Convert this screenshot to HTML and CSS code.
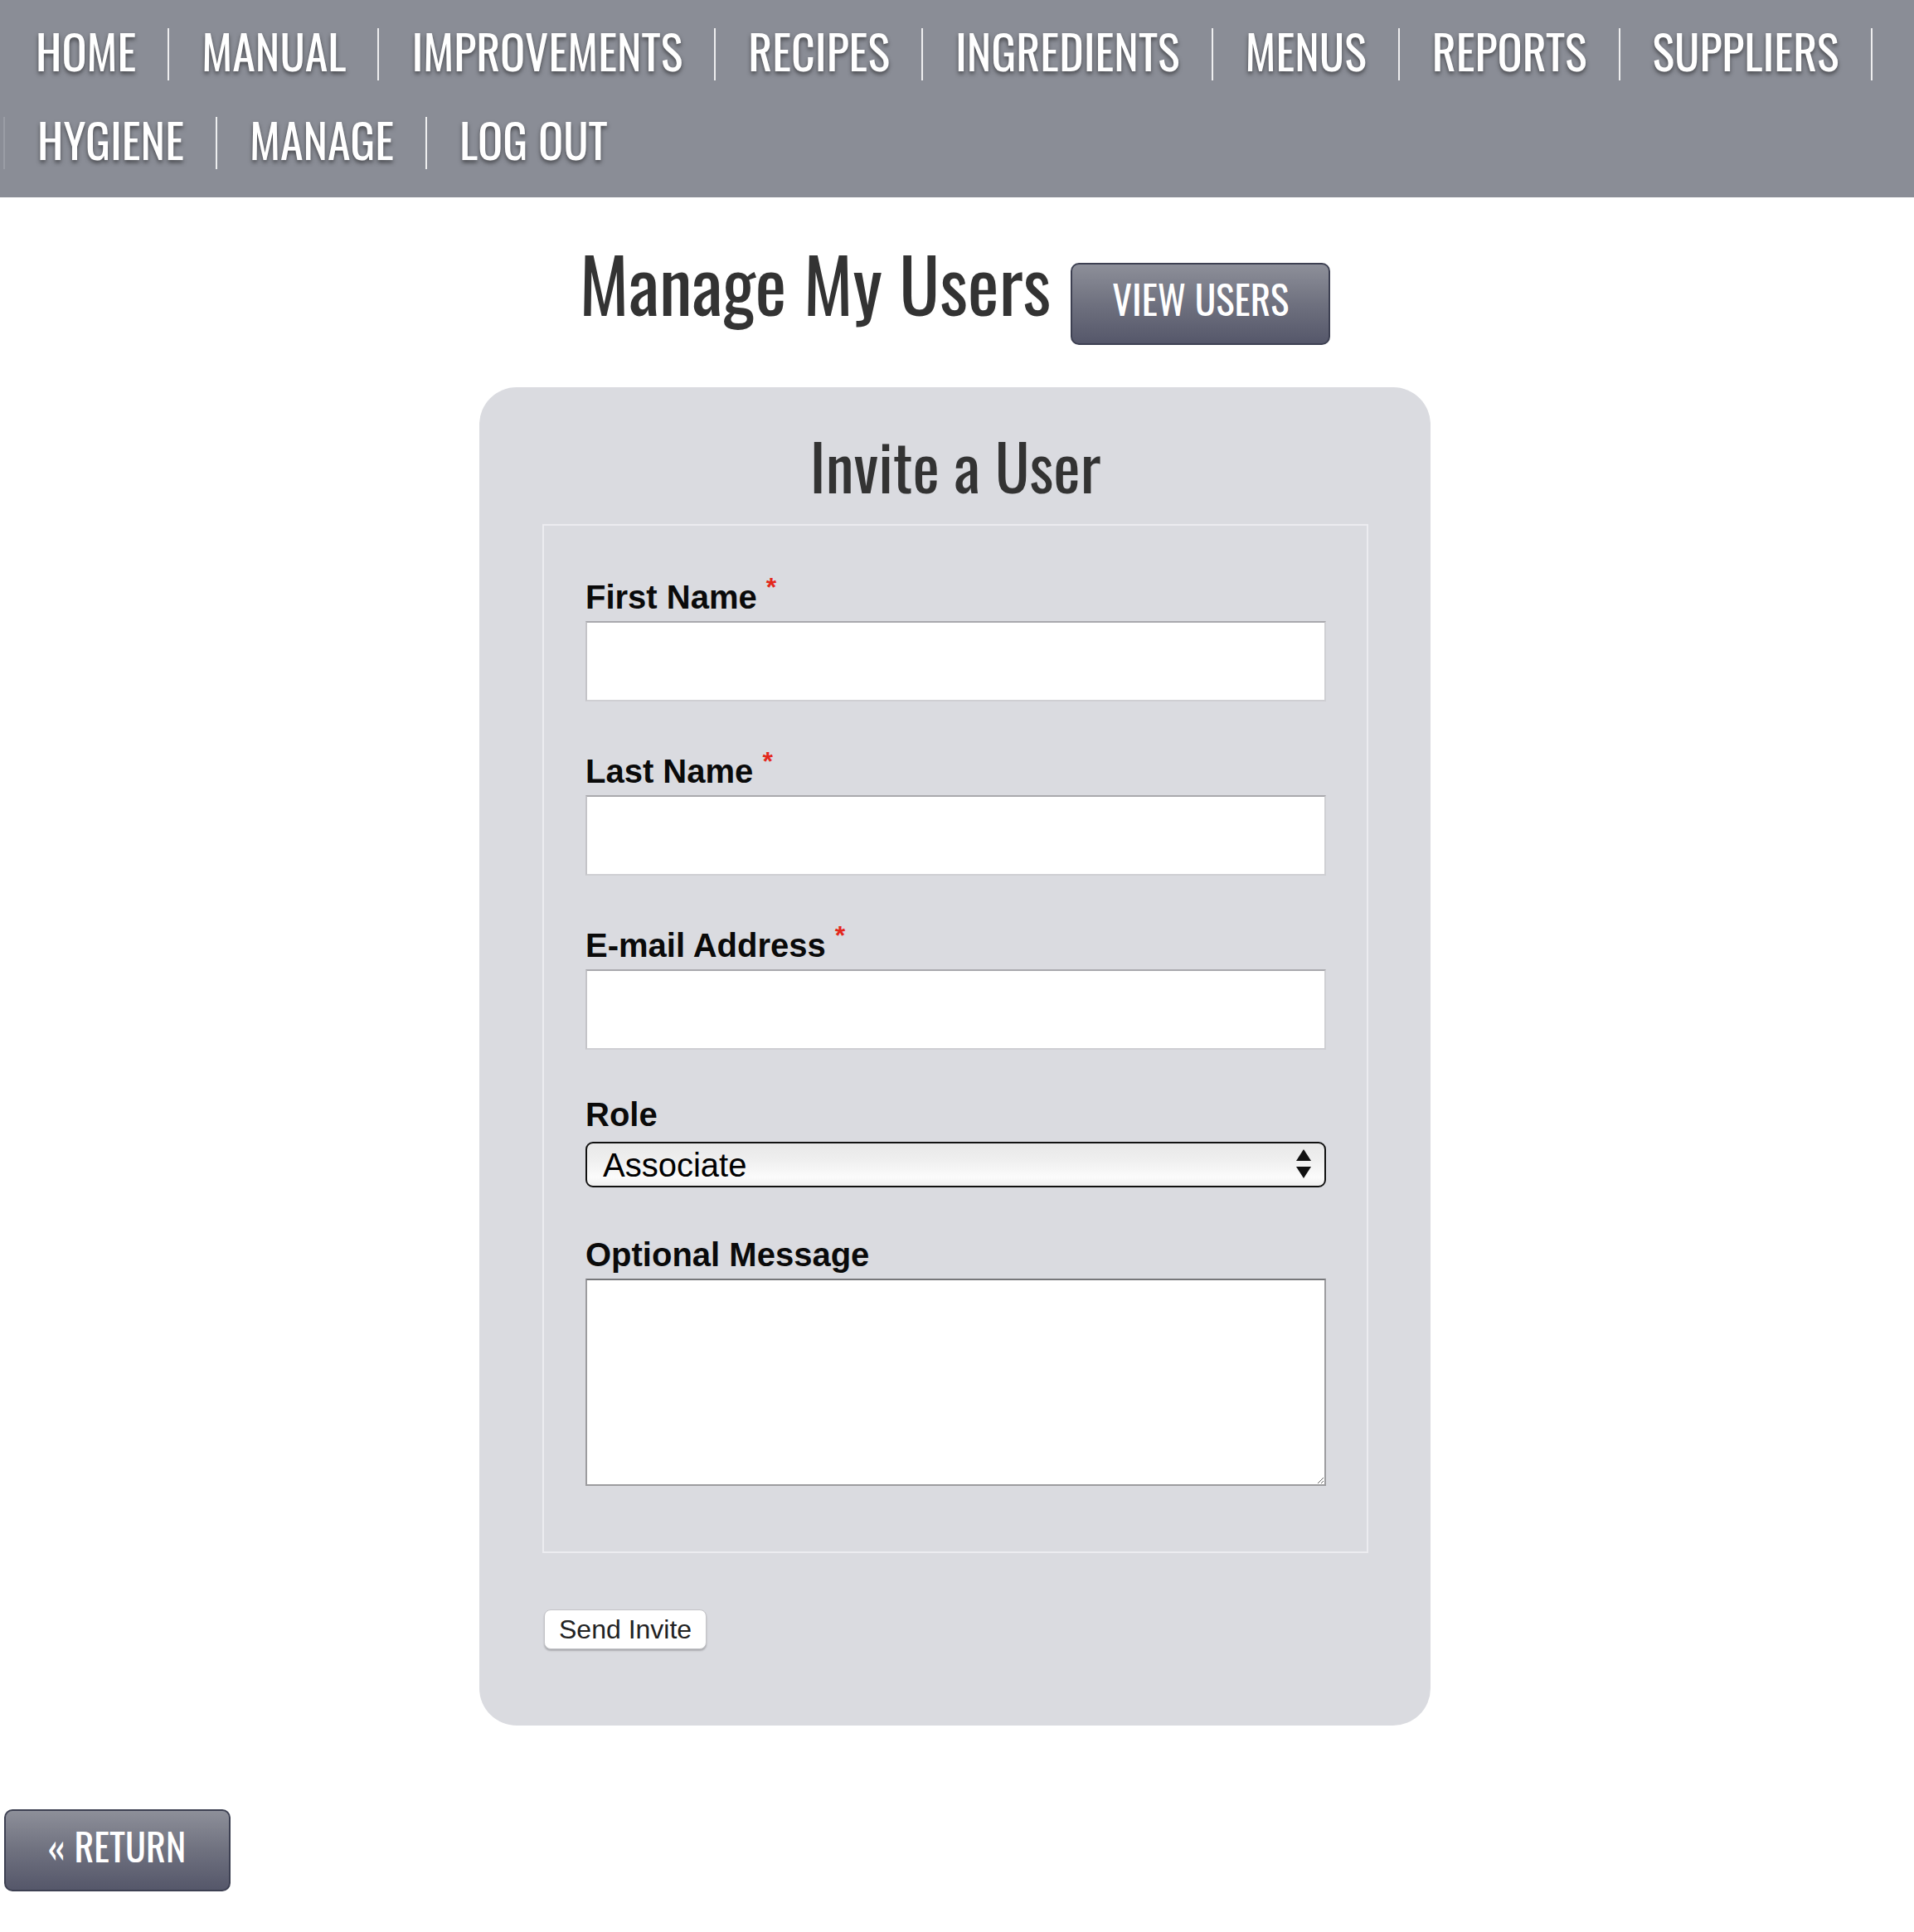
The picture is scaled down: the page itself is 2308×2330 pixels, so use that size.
FILE: index.html
```html
<!DOCTYPE html>
<html lang="en">
<head>
<meta charset="utf-8">
<title>Manage My Users</title>
<link rel="stylesheet" href="styles.css">
</head>
<body>
<nav class="topnav">
  <ul class="nav-list">
    <li class="nav-item"><a class="nav-link" href="#">HOME</a></li>
    <li class="nav-item"><a class="nav-link" href="#">MANUAL</a></li>
    <li class="nav-item"><a class="nav-link" href="#">IMPROVEMENTS</a></li>
    <li class="nav-item"><a class="nav-link" href="#">RECIPES</a></li>
    <li class="nav-item"><a class="nav-link" href="#">INGREDIENTS</a></li>
    <li class="nav-item"><a class="nav-link" href="#">MENUS</a></li>
    <li class="nav-item"><a class="nav-link" href="#">REPORTS</a></li>
    <li class="nav-item"><a class="nav-link" href="#">SUPPLIERS</a></li>
    <li class="nav-item nav-item-wrap"><a class="nav-link" href="#">HYGIENE</a></li>
    <li class="nav-item"><a class="nav-link" href="#">MANAGE</a></li>
    <li class="nav-item"><a class="nav-link" href="#">LOG OUT</a></li>
  </ul>
</nav>

<main class="page">
  <div class="title-row">
    <h1 class="page-title">Manage My Users</h1>
    <a class="btn-dark" href="#">VIEW USERS</a>
  </div>

  <section class="card">
    <h2 class="card-title">Invite a User</h2>
    <form class="invite-form">
      <fieldset class="fields">
        <div class="field">
          <label class="field-label">First Name <span class="req">*</span></label>
          <input class="text-input" type="text">
        </div>
        <div class="field">
          <label class="field-label">Last Name <span class="req">*</span></label>
          <input class="text-input" type="text">
        </div>
        <div class="field">
          <label class="field-label">E-mail Address <span class="req">*</span></label>
          <input class="text-input" type="text">
        </div>
        <div class="field field-role">
          <label class="field-label">Role</label>
          <div class="select-wrap">
            <select class="select-input">
              <option>Associate</option>
            </select>
            <svg class="select-arrows" width="20" height="36" viewBox="0 0 20 36"><polygon points="10,0 19,14 1,14" fill="#111"/><polygon points="1,21 19,21 10,35" fill="#111"/></svg>
          </div>
        </div>
        <div class="field field-msg">
          <label class="field-label">Optional Message</label>
          <textarea class="text-area"></textarea>
        </div>
      </fieldset>
      <button class="btn-send" type="button">Send Invite</button>
    </form>
  </section>

  <a class="btn-dark btn-return" href="#">&laquo; RETURN</a>
</main>
</body>
</html>
```
FILE: styles.css
```css
html, body {
  margin: 0;
  padding: 0;
  background: #ffffff;
}
body {
  font-family: "Liberation Sans", Arial, sans-serif;
  color: #000;
}

/* ---------- top navigation ---------- */
.topnav {
  background: #8a8d96;
  padding: 34px 0 34px 4px;
}
.nav-list {
  list-style: none;
  margin: 0;
  padding: 0;
  display: flex;
  flex-wrap: wrap;
  row-gap: 44px;
}
.nav-item {
  font-family: "Oswald", sans-serif;
  font-size: 56px;
  line-height: 53px;
  padding: 0 38px 10px 39px;
  border-right: 2px solid rgba(255, 255, 255, 0.85);
}
.nav-item:last-child {
  border-right: none;
}
.nav-item-wrap {
  border-left: 2px solid rgba(255, 255, 255, 0.14);
}
.nav-link {
  color: #ffffff;
  text-decoration: none;
  text-shadow: 0 3px 5px rgba(0, 0, 0, 0.5);
}

/* ---------- title row ---------- */
.page {
  padding: 0 5px 0 0;
}
.title-row {
  display: flex;
  justify-content: center;
  align-items: baseline;
  gap: 24px;
  margin-top: 53px;
}
.page-title {
  font-family: "Oswald", sans-serif;
  font-weight: 400;
  font-size: 90px;
  line-height: 100px;
  color: #333333;
  margin: 0;
}
.btn-dark {
  display: inline-block;
  box-sizing: border-box;
  height: 99px;
  padding: 11px 48px 0;
  line-height: 60px;
  font-family: "Oswald", sans-serif;
  font-size: 47px;
  color: #ffffff;
  text-decoration: none;
  background: linear-gradient(to bottom, #8d8f99 0%, #6f717f 50%, #55576a 100%);
  border: 2px solid #3d4052;
  border-radius: 10px;
}

/* ---------- card ---------- */
.card {
  box-sizing: border-box;
  width: 1147px;
  margin: 51px auto 0;
  padding: 46px 75px 92px 76px;
  background: #dadbe0;
  border-radius: 45px;
}
.card-title {
  font-family: "Oswald", sans-serif;
  font-weight: 400;
  font-size: 77px;
  line-height: 95px;
  color: #333333;
  text-align: center;
  margin: 0;
}
.invite-form {
  margin: 0;
}
.fields {
  margin: 24px 0 0;
  border: 2px solid #ececf0;
  padding: 63px 49px 79px 50px;
  min-width: 0;
}
.field {
  margin-top: 61px;
}
.field:first-child {
  margin-top: 0;
}
.field-role {
  margin-top: 55px;
}
.field-msg {
  margin-top: 58px;
}
.field-label {
  display: block;
  font-weight: bold;
  font-size: 40px;
  line-height: 46px;
  margin-bottom: 6px;
  color: #0a0a0a;
}
.field-role .field-label {
  margin-bottom: 10px;
}
.req {
  position: relative;
  top: -15px;
  font-size: 32px;
  line-height: 0;
  color: #e3281c;
}
.text-input {
  display: block;
  box-sizing: border-box;
  width: 100%;
  height: 97px;
  margin: 0;
  background: #ffffff;
  border: 2px solid #cfcfd3;
  border-top-color: #a9a9ad;
  border-left-color: #c4c4c8;
}
.select-wrap {
  position: relative;
}
.select-input {
  display: block;
  box-sizing: border-box;
  width: 100%;
  height: 55px;
  margin: 0;
  padding: 0 0 0 19px;
  -webkit-appearance: none;
  appearance: none;
  font-family: "Liberation Sans", Arial, sans-serif;
  font-size: 40px;
  color: #000;
  border: 2px solid #111111;
  border-radius: 9px;
  background: linear-gradient(to bottom, #e8e8e8 0%, #eeeeee 35%, #fbfbfb 80%, #f0f0f0 100%);
}
.select-arrows {
  position: absolute;
  right: 17px;
  top: 9px;
}
.text-area {
  display: block;
  box-sizing: border-box;
  width: 100%;
  height: 250px;
  margin: 0;
  background: #ffffff;
  border: 2px solid #9c9c9f;
  border-top-color: #77777a;
  resize: vertical;
}

/* ---------- buttons ---------- */
.btn-send {
  display: block;
  box-sizing: border-box;
  height: 48px;
  margin: 68px 0 0 2px;
  padding: 0 17px;
  font-family: "Liberation Sans", Arial, sans-serif;
  font-size: 32px;
  color: #222222;
  background: #ffffff;
  border: 1px solid #c4c4c8;
  border-radius: 8px;
  box-shadow: 0 2px 2px rgba(0, 0, 0, 0.22);
}
.btn-return {
  margin: 101px 0 0 5px;
  font-size: 46px;
  padding: 11px 52px 0 51px;
}
```
